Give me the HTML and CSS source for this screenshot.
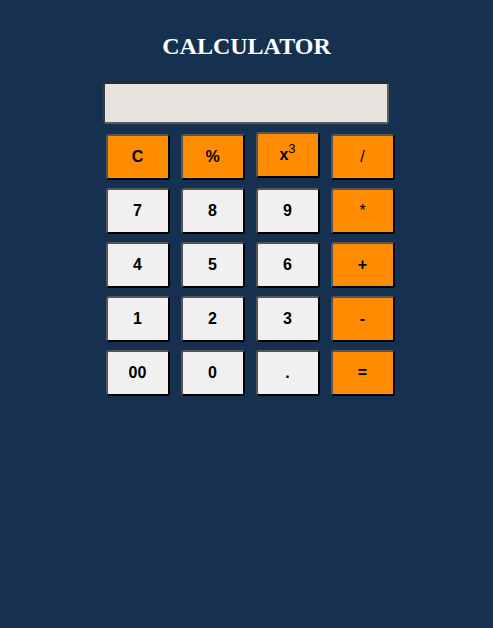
FILE: index.html
```html
<!DOCTYPE html>
<html>
<head>
<meta charset="utf-8">
<link rel="stylesheet" href="styles.css">
</head>
<body>
<div class="calc">
  <h2 class="title">CALCULATOR</h2>
  <input class="display" type="text">
  <div class="keys">
    <button class="key op">C</button>
    <button class="key op">%</button>
    <button class="key op cube">x<sup>3</sup></button>
    <button class="key op thin">/</button>
    <button class="key">7</button>
    <button class="key">8</button>
    <button class="key">9</button>
    <button class="key op thin">*</button>
    <button class="key">4</button>
    <button class="key">5</button>
    <button class="key">6</button>
    <button class="key op">+</button>
    <button class="key">1</button>
    <button class="key">2</button>
    <button class="key">3</button>
    <button class="key op">-</button>
    <button class="key">00</button>
    <button class="key">0</button>
    <button class="key">.</button>
    <button class="key op">=</button>
  </div>
</div>
</body>
</html>
```
FILE: styles.css
```css
html, body {
  margin: 0;
  padding: 0;
  background: #163050;
  height: 100%;
}
.calc {
  display: flex;
  flex-direction: column;
  align-items: center;
  padding-top: 33px;
}
.title {
  margin: 0;
  font-family: "Liberation Serif", serif;
  font-weight: bold;
  font-size: 24px;
  line-height: 27px;
  color: #ffffff;
}
.display {
  box-sizing: border-box;
  margin-top: 22px;
  margin-right: 1px;
  width: 286px;
  height: 42px;
  background: #e7e3df;
  border: 2px solid;
  border-top-color: #2a2a2a;
  border-left-color: #3a3a3a;
  border-right-color: #5a5a5a;
  border-bottom-color: #5a5a5a;
  border-radius: 3px;
  padding: 0 6px;
  font-family: "Liberation Sans", sans-serif;
  font-size: 18px;
}
.keys {
  margin-top: 10px;
  margin-left: 7px;
  display: grid;
  grid-template-columns: repeat(4, 64px);
  grid-auto-rows: 46px;
  column-gap: 11px;
  row-gap: 8px;
}
.key {
  box-sizing: border-box;
  width: 64px;
  height: 46px;
  margin: 0;
  padding: 0;
  background: #f0f0f0;
  border: 2px solid;
  border-top-color: #555;
  border-left-color: #555;
  border-right-color: #000;
  border-bottom-color: #000;
  border-radius: 3px;
  font-family: "Liberation Sans", sans-serif;
  font-weight: bold;
  font-size: 16px;
  color: #000;
  line-height: 1;
}
.op {
  background: #ff8c00;
}
.thin {
  font-weight: normal;
}
.cube {
  margin-top: -2px;
}
.cube sup {
  font-size: 13px;
  font-weight: normal;
  vertical-align: 7px;
  line-height: 0;
}
```
